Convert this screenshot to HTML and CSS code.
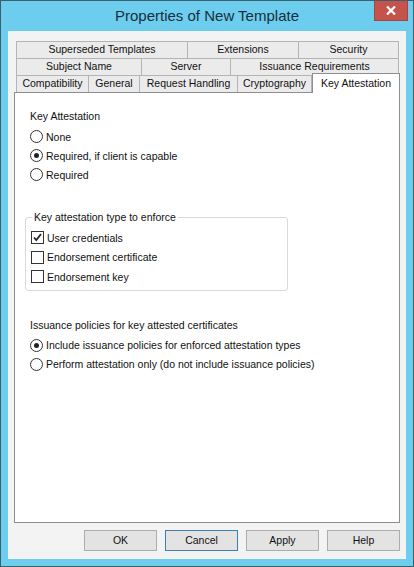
FILE: index.html
```html
<!DOCTYPE html>
<html>
<head>
<meta charset="utf-8">
<link rel="stylesheet" href="styles.css">
</head>
<body>
<div class="window">
  <div class="titlebar">
    <div class="spacer"></div>
    <div class="title">Properties of New Template</div>
    <div class="controls">
      <div class="close">
        <svg width="10" height="9" viewBox="0 0 10 9"><path d="M1 0.5 L9 8.5 M9 0.5 L1 8.5" stroke="#fff" stroke-width="2.2" fill="none"/></svg>
      </div>
    </div>
  </div>
  <div class="client">
    <div class="tabs">
      <div class="tab-row row1">
        <div class="tab">Superseded Templates</div>
        <div class="tab">Extensions</div>
        <div class="tab">Security</div>
      </div>
      <div class="tab-row row2">
        <div class="tab">Subject Name</div>
        <div class="tab">Server</div>
        <div class="tab">Issuance Requirements</div>
      </div>
      <div class="tab-row row3">
        <div class="tab">Compatibility</div>
        <div class="tab">General</div>
        <div class="tab">Request Handling</div>
        <div class="tab">Cryptography</div>
        <div class="tab selected">Key Attestation</div>
      </div>
    </div>
    <div class="panel">
      <div class="label">Key Attestation</div>
      <div class="options first">
        <div class="opt"><span class="radio"></span><span>None</span></div>
        <div class="opt"><span class="radio checked"></span><span>Required, if client is capable</span></div>
        <div class="opt"><span class="radio"></span><span>Required</span></div>
      </div>
      <fieldset class="group">
        <legend>Key attestation type to enforce</legend>
        <div class="chk-row"><span class="checkbox checked"><svg width="11" height="11" viewBox="0 0 11 11"><path d="M2 5.5 L4.3 8 L9 2" stroke="#222" stroke-width="1.8" fill="none"/></svg></span><span>User credentials</span></div>
        <div class="chk-row"><span class="checkbox"></span><span>Endorsement certificate</span></div>
        <div class="chk-row"><span class="checkbox"></span><span>Endorsement key</span></div>
      </fieldset>
      <div class="label second">Issuance policies for key attested certificates</div>
      <div class="options">
        <div class="opt"><span class="radio checked"></span><span>Include issuance policies for enforced attestation types</span></div>
        <div class="opt"><span class="radio"></span><span>Perform attestation only (do not include issuance policies)</span></div>
      </div>
    </div>
    <div class="buttons">
      <div class="btn">OK</div>
      <div class="btn default">Cancel</div>
      <div class="btn">Apply</div>
      <div class="btn">Help</div>
    </div>
  </div>
</div>
</body>
</html>
```
FILE: styles.css
```css
* { box-sizing: border-box; }
html, body { margin: 0; padding: 0; }
body {
  width: 414px;
  height: 567px;
  overflow: hidden;
  font-family: "Liberation Sans", Arial, sans-serif;
  font-size: 10.5px;
  color: #111;
}
.window {
  width: 414px;
  height: 567px;
  background: #6ccdef;
  border: 1px solid #3b5f6c;
  display: flex;
  flex-direction: column;
}
.titlebar {
  height: 30px;
  display: grid;
  grid-template-columns: 1fr auto 1fr;
  align-items: start;
}
.title {
  font-size: 15px;
  color: #18303c;
  line-height: 28px;
  padding-top: 1px;
}
.controls {
  display: flex;
  justify-content: flex-end;
  padding-right: 5px;
}
.close {
  width: 34px;
  height: 20px;
  background: #c6524c;
  border: 1px solid #a8443f;
  border-top: none;
  display: flex;
  align-items: center;
  justify-content: center;
}
.client {
  flex: 1;
  margin: 0 7px 7px 7px;
  background: #f3f3f3;
  padding: 10px 6px 8px 6px;
  display: flex;
  flex-direction: column;
}
.tabs {
  margin-left: 2px;
}
.tab-row {
  display: grid;
  height: 17px;
}
.row1 { grid-template-columns: 171px 111px 100px; }
.row2 { grid-template-columns: 125px 89px 168px; }
.row3 { grid-template-columns: 72px 51px 98px 75px 87px; }
.tab {
  background: #ebebeb;
  border: 1px solid #b4b4b4;
  border-bottom: none;
  margin-right: -1px;
  text-align: center;
  line-height: 15px;
  white-space: nowrap;
  color: #111;
}
.tab.selected {
  position: relative;
  z-index: 2;
  background: #fff;
  border-color: #8e8e8e;
  margin: -2px -1px -1px 0;
  line-height: 18px;
}
.row3 .tab:nth-child(4) { margin-right: 0; }
.panel {
  position: relative;
  z-index: 1;
  flex: 1;
  background: #fff;
  border: 1px solid #8e8e8e;
  padding: 15px 15px 0 15px;
}
.label {
  line-height: 16px;
}
.options {
  margin-top: 3px;
}
.opt {
  display: flex;
  align-items: center;
  height: 19px;
}
.radio {
  width: 13px;
  height: 13px;
  border: 1px solid #333;
  border-radius: 50%;
  background: #fff;
  margin-right: 3px;
  display: flex;
  align-items: center;
  justify-content: center;
  flex: none;
}
.radio.checked::after {
  content: "";
  width: 5px;
  height: 5px;
  border-radius: 50%;
  background: #222;
}
.group {
  margin: 25px 0 0 -5px;
  width: 263px;
  padding: 3px 5px 3px 5px;
  border: 1px solid #d3dbe0;
  border-radius: 3px;
}
.group legend {
  padding: 0 2px;
  margin-left: 1px;
  line-height: 16px;
}
.chk-row {
  display: flex;
  align-items: center;
  height: 19.5px;
}
.checkbox {
  width: 13px;
  height: 13px;
  border: 1px solid #333;
  background: #fff;
  margin-right: 3px;
  display: flex;
  align-items: center;
  justify-content: center;
  flex: none;
}
.label.second {
  margin-top: 26px;
}
.buttons {
  display: flex;
  justify-content: flex-end;
  gap: 8px;
  margin-top: 7px;
}
.btn {
  width: 73px;
  height: 21px;
  background: #e3e3e3;
  border: 1px solid #acacac;
  text-align: center;
  line-height: 19px;
}
.btn.default {
  border-color: #3c7fb1;
}
```
